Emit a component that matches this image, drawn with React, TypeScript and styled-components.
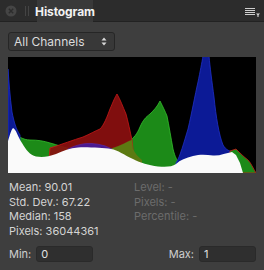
import React from 'react';
import styled, { createGlobalStyle } from 'styled-components';

const GlobalStyle = createGlobalStyle`
  html, body {
    margin: 0;
    padding: 0;
    background: #3e3e3e;
  }
  * {
    box-sizing: border-box;
  }
`;

const stats = [
  { label: 'Mean', value: '90.01' },
  { label: 'Std. Dev.', value: '67.22' },
  { label: 'Median', value: '158' },
  { label: 'Pixels', value: '36044361' },
];

const probes = ['Level', 'Pixels', 'Percentile'];

export default function App() {
  return (
    <>
      <GlobalStyle />
      <Panel>
        <Header>
          <CloseButton>
            <svg width="12" height="12" viewBox="0 0 12 12">
              <circle cx="6" cy="6" r="5.5" fill="#454545" />
              <path d="M3.8 3.8 L8.2 8.2 M8.2 3.8 L3.8 8.2" stroke="#2c2c2c" strokeWidth="1.4" />
            </svg>
          </CloseButton>
          <Grip />
          <Tab>Histogram</Tab>
          <Spacer />
          <MenuButton>
            <svg width="16" height="10" viewBox="0 0 16 10">
              <path d="M0 1.5 H10 M0 3.5 H10 M0 5.5 H10 M0 7.5 H10" stroke="#cfcfcf" strokeWidth="1" />
              <path d="M11 6.5 H15 L13 8.5 Z" fill="#e0e0e0" />
              <rect x="12.5" y="8" width="1" height="2" fill="#e0e0e0" />
            </svg>
          </MenuButton>
        </Header>
        <Body>
          <Select>
            <span>All Channels</span>
            <svg width="6" height="9" viewBox="0 0 6 9">
              <path d="M3 0.5 L5.5 3.5 H0.5 Z M3 8.5 L5.5 5.5 H0.5 Z" fill="#d8d8d8" />
            </svg>
          </Select>
          <Chart viewBox="0 0 248 116" preserveAspectRatio="none">
            <rect width="248" height="116" fill="#000" />
            {/* green */}
            <path
              d="M4,116 L6,76 C10,79 15,83 22,83 C30,83 36,84 42,86 C50,88 56,91 66,92 L66,116 Z"
              fill="#1c8a18" stroke="#34c02c" strokeWidth="0.8"
            />
            <path
              d="M98,116 L98,93 C106,91 114,88 121,84 C126,81 129,77 132,70 C135,63 138,60 142,57 C146,53 149,50 152,44 C155,50 157,54 159,59 C161,69 163,81 165,92 C167,100 169,104 172,106 L172,116 Z"
              fill="#1c8a18" stroke="#34c02c" strokeWidth="0.8"
            />
            {/* red */}
            <path
              d="M40,116 L42,91 C55,87 65,83 75,80 C82,77 87,74 92,72 C96,68 99,60 102,52 C105,45 107,40 109,37 C112,42 115,50 118,57 C120,64 122,74 124,83 L125,92 L125,116 Z"
              fill="#8a0f0f" fillOpacity="0.93" stroke="#c81818" strokeWidth="0.8"
            />
            {/* red + green overlap */}
            <path
              d="M98,116 L98,93 C106,91 114,88 121,84 L124,83 L125,92 C127,96 130,100 134,103 L134,116 Z"
              fill="#5c7a12"
            />
            {/* blue */}
            <path
              d="M0,116 L0,12 C1,25 2,40 4,55 C6,65 8,72 12,78 L12,116 Z"
              fill="#0c1a96" stroke="#2030c8" strokeWidth="0.8"
            />
            <path
              d="M60,116 L60,92 C68,88 76,86 84,86.5 C92,87 98,89 104,92 L104,116 Z"
              fill="#4a1a90" stroke="#5a2ab0" strokeWidth="0.6"
            />
            <path
              d="M168,116 L168,106 C172,100 176,85 180,72 C184,55 187,38 190,25 C192,15 194,5 195,-1 L201,-1 C202,10 204,25 206,40 C208,60 211,78 215,88 C218,93 222,95 226,94 L226,116 Z"
              fill="#0c1a96" stroke="#2030c8" strokeWidth="0.8"
            />
            <path
              d="M222,116 L222,94 L228,92 C232,96 236,100 240,103 C243,106 245,111 248,116 Z"
              fill="#1c8a18" stroke="#c81818" strokeWidth="0.8"
            />
            {/* luminosity */}
            <path
              d="M0,116 L0,84 C2,78 3,73 5,71 C8,72 10,80 14,86 C18,93 22,98 28,99.5 C34,100.5 40,100 48,97 C55,94 62,91 70,90.5 C80,90 95,91 103,92 C110,93 116,98 125,102 C133,106 140,108 150,109.5 C158,110 164,110 168,107 C172,103 178,101 185,99 C192,97 198,97.5 205,98.5 C212,99 218,96 224,95 L228,98 L232,106 L235,116 Z"
              fill="#fafafa"
            />
          </Chart>
          <Stats>
            <Column>
              {stats.map((s) => (
                <StatLine key={s.label}>
                  {s.label}: {s.value}
                </StatLine>
              ))}
            </Column>
            <Column>
              {probes.map((p) => (
                <StatLine key={p} $muted>
                  {p}: -
                </StatLine>
              ))}
            </Column>
          </Stats>
          <Range>
            <Field>
              <FieldLabel>Min:</FieldLabel>
              <Input defaultValue="0" />
            </Field>
            <Field>
              <FieldLabel>Max:</FieldLabel>
              <Input defaultValue="1" />
            </Field>
          </Range>
        </Body>
      </Panel>
    </>
  );
}

const Panel = styled.div`
  width: 264px;
  height: 270px;
  background: #3e3e3e;
  font-family: Inter, 'Liberation Sans', sans-serif;
  overflow: hidden;
`;

const Header = styled.div`
  height: 21px;
  display: flex;
  align-items: stretch;
  background: #2c2c2c;
  border-bottom: 1px solid #222;
  box-sizing: content-box;
`;

const CloseButton = styled.div`
  width: 21px;
  display: flex;
  align-items: center;
  justify-content: center;
  padding-left: 1px;
`;

const Grip = styled.div`
  width: 4px;
  margin: 6px 8px 5px 4px;
  border-left: 1px solid #444;
  border-right: 1px solid #444;
`;

const Tab = styled.div`
  width: 56px;
  margin-bottom: -1px;
  background: #393939;
  color: #f2f2f2;
  font-size: 12px;
  font-weight: 700;
  display: flex;
  align-items: center;
  justify-content: center;
  letter-spacing: -0.1px;
`;

const Spacer = styled.div`
  flex: 1;
`;

const MenuButton = styled.div`
  width: 18px;
  margin-right: 1px;
  display: flex;
  align-items: center;
  padding-top: 2px;
`;

const Body = styled.div`
  padding: 10px 8px 0 8px;
  display: flex;
  flex-direction: column;
`;

const Select = styled.div`
  width: 107px;
  height: 19px;
  border: 1px solid #262626;
  border-radius: 3px;
  background: #383838;
  color: #dcdcdc;
  font-size: 12px;
  display: flex;
  align-items: center;
  justify-content: space-between;
  padding: 0 7px 0 5px;
`;

const Chart = styled.svg`
  display: block;
  width: 248px;
  height: 116px;
  margin-top: 6px;
`;

const Stats = styled.div`
  display: grid;
  grid-template-columns: 125px 1fr;
  margin-top: 7px;
  padding-left: 1px;
`;

const Column = styled.div`
  display: flex;
  flex-direction: column;
`;

const StatLine = styled.div<{ $muted?: boolean }>`
  font-size: 11px;
  line-height: 14.6px;
  color: ${(p) => (p.$muted ? '#6c6c6c' : '#d4d4d4')};
  white-space: nowrap;
`;

const Range = styled.div`
  display: flex;
  justify-content: space-between;
  margin-top: 8px;
  padding-left: 1px;
`;

const Field = styled.div`
  display: flex;
  align-items: center;
  gap: 5px;
`;

const FieldLabel = styled.span`
  font-size: 11px;
  color: #cfcfcf;
`;

const Input = styled.input`
  width: 57px;
  height: 16px;
  border: 1px solid #2a2a2a;
  border-radius: 3px;
  background: #2f2f2f;
  color: #e0e0e0;
  font-family: inherit;
  font-size: 11px;
  padding: 0 4px;
  outline: none;
`;
